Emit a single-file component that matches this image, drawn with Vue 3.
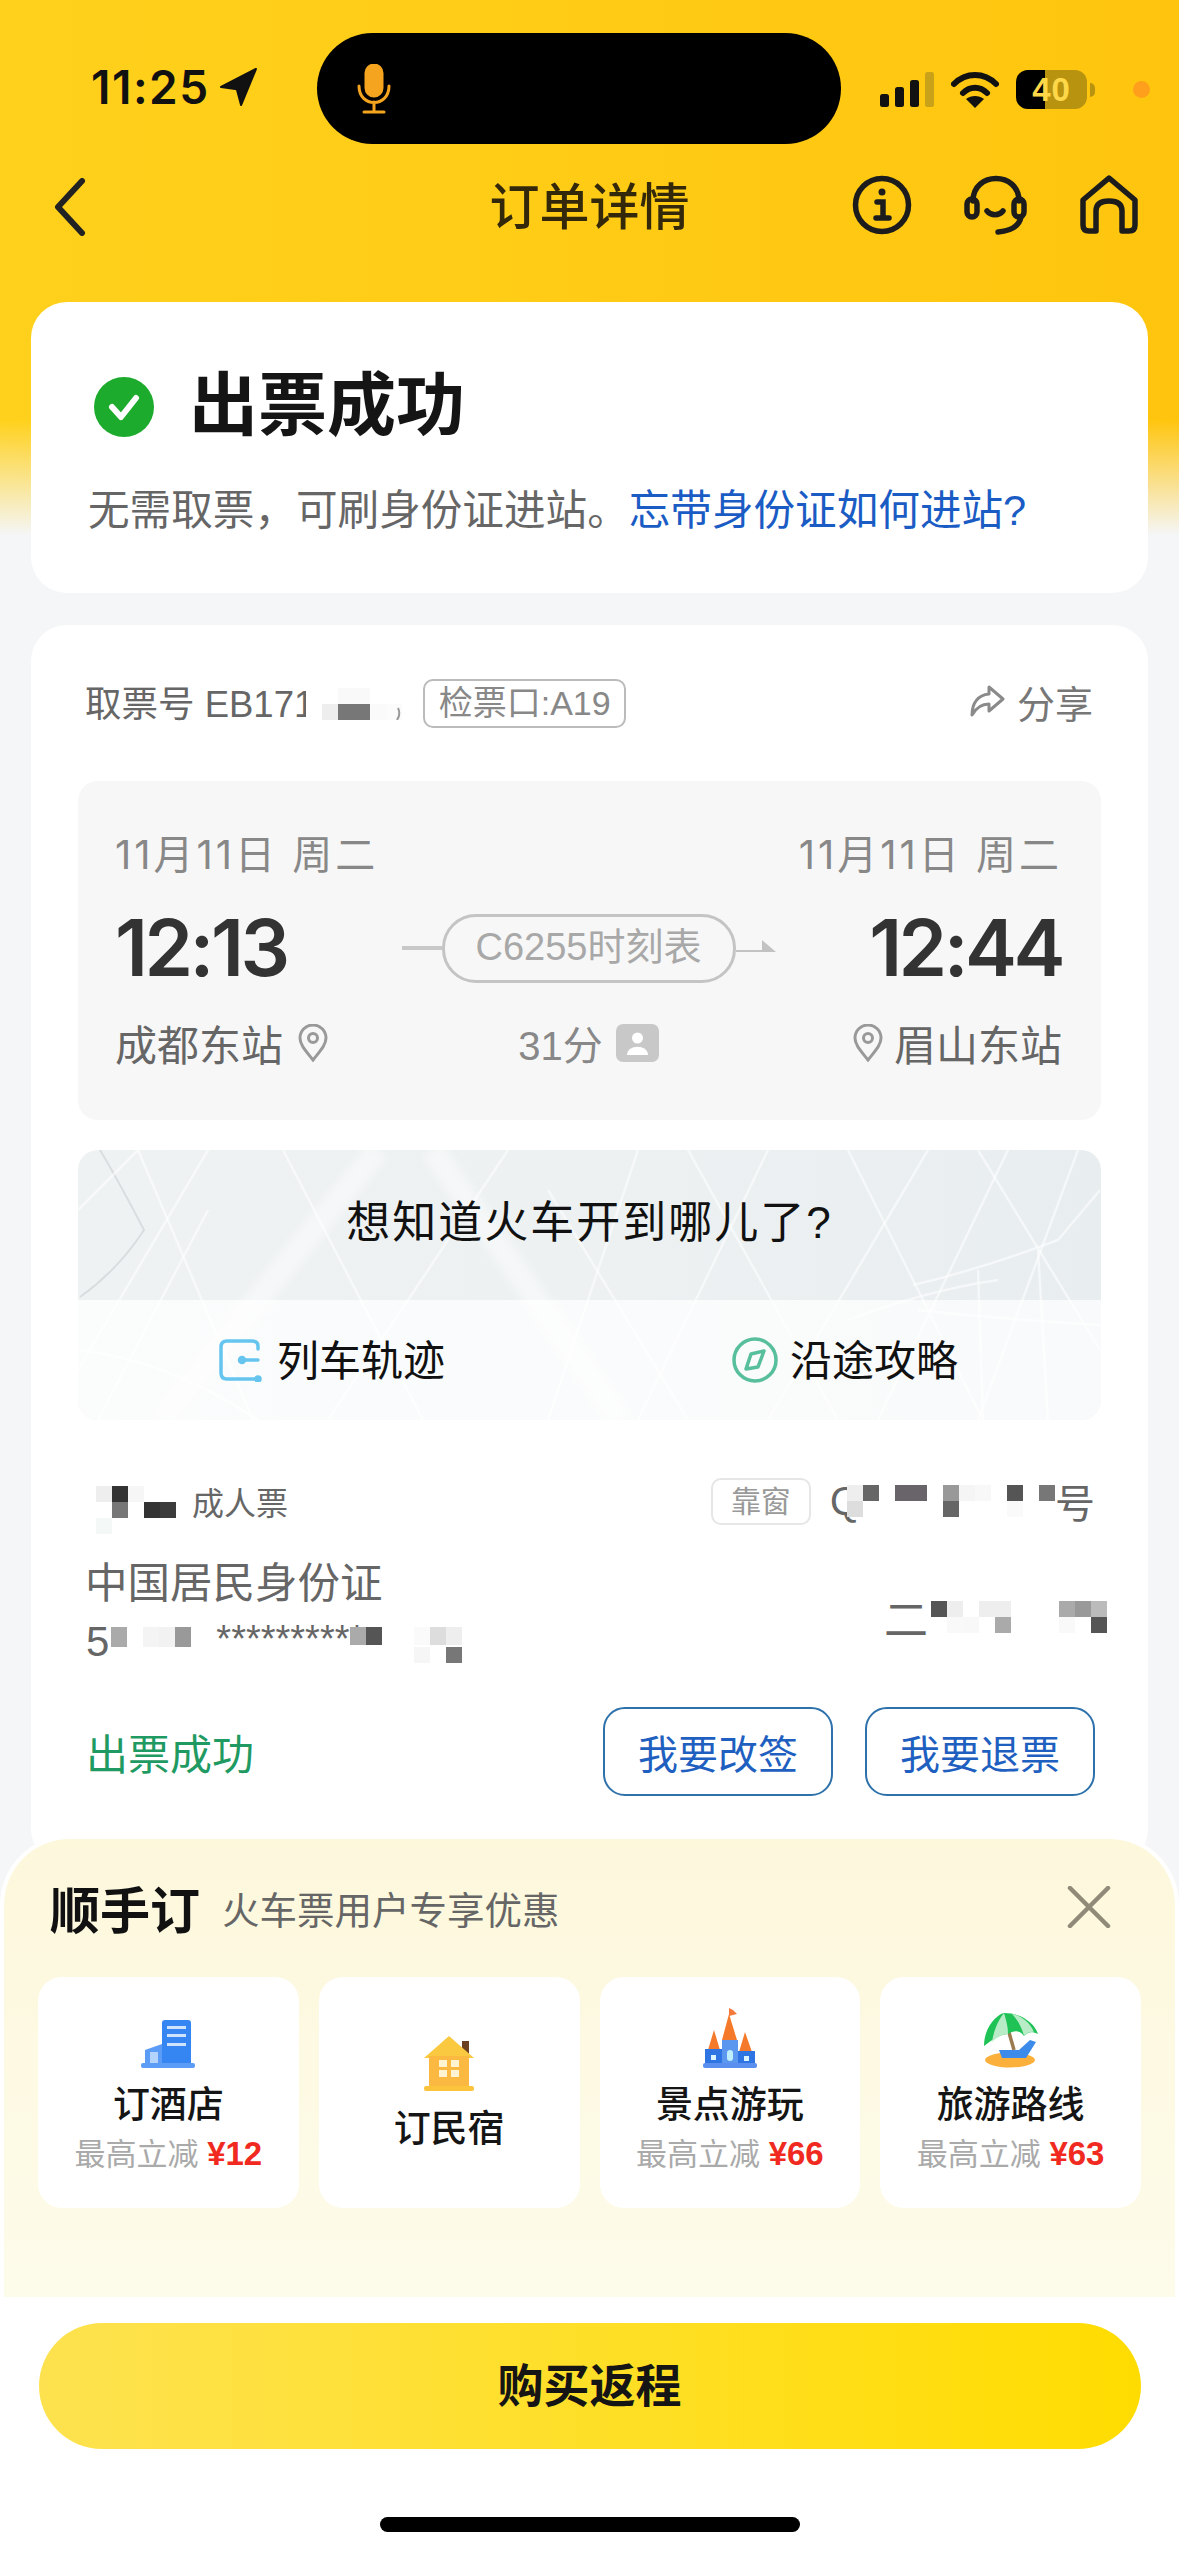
<script setup>
// blurred-out bits of the ticket, [col, row, colour] on a 16px grid
const ticketCells = [[1, 0, '#fff'], [1, 1, '#eee'], [2, 1, '#777'], [3, 1, '#777'], [2, 0, '#f9f9f9'], [3, 0, '#f9f9f9'], [4, 1, '#fafafa'], [5, 1, '#fbfbfb']]
const nameCells = [[0, 0, '#eee'], [1, 0, '#333'], [2, 0, '#f6f6f6'], [1, 1, '#777'], [3, 1, '#333'], [4, 1, '#3c3c3c'], [0, 2, '#f4f8f6']]
const seatCells = [[0, 0, '#eee'], [1, 0, '#666'], [3, 0, '#69646a'], [4, 0, '#69646a'], [6, 0, '#999'], [7, 0, '#f5f5f5'], [8, 0, '#f8f8f8'], [10, 0, '#555'], [12, 0, '#777'], [0, 1, '#ddd'], [6, 1, '#666'], [10, 1, '#fafafa']]
const idCellsA = [[0, 0, '#aaa'], [2, 0, '#f4f4f4'], [3, 0, '#f2f2f2'], [4, 0, '#999']]
const idCellsB = [[0, 0, '#aaa'], [1, 0, '#555'], [4, 1, '#f6f6f6'], [4, 0, '#fafafa'], [5, 0, '#ddd'], [6, 0, '#eee'], [6, 1, '#777']]
const berthCells = [[0, 0, '#555'], [1, 0, '#eee'], [3, 0, '#eee'], [4, 0, '#eee'], [8, 0, '#aaa'], [9, 0, '#999'], [10, 0, '#bbb'], [1, 1, '#f9f9f9'], [2, 1, '#f8f8f8'], [4, 1, '#aaa'], [8, 1, '#f9f9f9'], [10, 1, '#555']]

const mapLines = [
  'M60 0 L175 270', 'M0 60 L60 0', 'M130 0 L0 220', 'M205 0 L345 270', 'M130 60 L20 270',
  'M430 0 L250 270', 'M470 40 L610 270', 'M560 0 L470 270', 'M610 0 L760 270', 'M690 0 L560 270',
  'M770 0 L905 270', 'M850 0 L690 270', 'M930 0 L800 270', 'M900 0 L1022 200', 'M1000 0 L900 270',
  'M835 135 Q900 120 980 90 L1022 40', 'M770 170 Q850 140 920 130', 'M900 120 L905 270', 'M960 100 L970 270',
  'M840 160 Q930 170 1022 175', 'M0 200 Q90 210 180 270'
]
</script>

<template>
  <div class="page">
    <div class="status">
      <div class="clock">
        <span>11:25</span>
        <svg width="38" height="38" viewBox="0 0 36 36"><path d="M34 1 L1 18 L16 20 L20 35 Z" fill="#111" stroke="#111" stroke-width="2" stroke-linejoin="round" /></svg>
      </div>
      <div class="island">
        <svg width="34" height="50" viewBox="0 0 34 50" fill="none" stroke="#f5a41f" stroke-width="3" stroke-linecap="round">
          <rect x="9" y="1" width="16" height="31" rx="8" fill="#f5a41f" />
          <path d="M2 22 C2 44 32 44 32 22 M17 38 V48 M7 48 H27" />
        </svg>
      </div>
      <div class="sys">
        <svg width="56" height="36" viewBox="0 0 56 36">
          <rect x="0" y="22" width="9" height="13" rx="2.5" fill="#111" />
          <rect x="15" y="15" width="9" height="20" rx="2.5" fill="#111" />
          <rect x="30" y="8" width="9" height="27" rx="2.5" fill="#111" />
          <rect x="45" y="0" width="9" height="35" rx="2.5" fill="#c9a21a" />
        </svg>
        <svg width="48" height="36" viewBox="0 0 48 36" fill="none" stroke="#111" stroke-width="6" stroke-linecap="round">
          <path d="M3 12 C15 0 33 0 45 12" />
          <path d="M12 21 C19 14 29 14 36 21" />
          <path d="M24 36 L15 27 C20 23 28 23 33 27 Z" fill="#111" stroke="none" />
        </svg>
        <div class="battery"><b class="battery-fill"></b><span>40</span></div>
        <i class="battery-nub"></i>
        <i class="dot"></i>
      </div>
    </div>

    <div class="nav">
      <svg class="back" width="32" height="58" viewBox="0 0 32 58" fill="none" stroke="#222" stroke-width="6" stroke-linecap="round" stroke-linejoin="round"><path d="M28 3 L4 29 L28 55" /></svg>
      <h1 class="nav-title">订单详情</h1>
      <div class="nav-icons">
        <svg width="60" height="60" viewBox="0 0 60 60" fill="none" stroke="#1c1c1c" stroke-width="5.5" stroke-linecap="round">
          <circle cx="30" cy="30" r="26.5" />
          <circle cx="30" cy="17" r="3.5" fill="#1c1c1c" stroke="none" />
          <path d="M25 27 H31 V43 M24 43 H37" />
        </svg>
        <svg width="64" height="60" viewBox="0 0 64 60" fill="none" stroke="#1c1c1c" stroke-width="5.5" stroke-linecap="round">
          <path d="M9 26 C9 -4 55 -4 55 26" />
          <rect x="3" y="24" width="10" height="18" rx="5" />
          <rect x="50" y="24" width="10" height="18" rx="5" />
          <path d="M23 36 C27 41 35 41 39 36" />
          <path d="M57 42 C55 52 46 56 34 57" />
        </svg>
        <svg width="58" height="60" viewBox="0 0 58 60" fill="none" stroke="#1c1c1c" stroke-width="5.5" stroke-linejoin="round" stroke-linecap="round">
          <path d="M3 25 L29 3 L55 25 V50 Q55 56 49 56 H42 V36 Q42 26 29 26 Q16 26 16 36 V56 H9 Q3 56 3 50 Z" />
        </svg>
      </div>
    </div>

    <section class="card result">
      <div class="result-head">
        <svg width="62" height="62" viewBox="0 0 62 62">
          <circle cx="31" cy="31" r="30" fill="#1cab2c" />
          <path d="M19 31 L28 41 L43 22" fill="none" stroke="#fff" stroke-width="6" stroke-linecap="round" stroke-linejoin="round" />
        </svg>
        <h2>出票成功</h2>
      </div>
      <p class="result-tip">无需取票，可刷身份证进站。<a>忘带身份证如何进站?</a></p>
    </section>

    <section class="card ticket">
      <div class="ticket-top">
        <span class="ticket-no">取票号 EB171</span>
        <svg class="mosaic ticket-mosaic" width="96" height="32">
          <rect x="0" y="0" width="96" height="32" fill="#fff" />
          <rect v-for="c in ticketCells" :key="c.join()" :x="c[0] * 16" :y="c[1] * 16" width="16" height="16" :fill="c[2]" />
          <path d="M92 20 Q95 26 91 32" fill="none" stroke="#999" stroke-width="2" />
        </svg>
        <span class="gate">检票口:A19</span>
        <span class="share">
          <svg width="36" height="36" viewBox="0 0 36 36" fill="none" stroke="#8a8a8a" stroke-width="3" stroke-linejoin="round"><path d="M20 4 L34 16 L20 28 V21 C12 21 7 25 3 32 C3 20 9 12 20 11 Z" /></svg>
          分享
        </span>
      </div>

      <div class="trip">
        <div class="trip-row dates">
          <span>11月11日 周二</span>
          <span>11月11日 周二</span>
        </div>
        <div class="trip-row times">
          <span class="time">12:13</span>
          <div class="route">
            <i class="route-line"></i>
            <span class="route-pill">C6255时刻表</span>
            <svg width="40" height="20" viewBox="0 0 40 20"><path d="M0 14 H40 L26 2 V12 H0 Z" fill="#c2c2c2" /></svg>
          </div>
          <span class="time end">12:44</span>
        </div>
        <div class="trip-row stations">
          <span class="station">
            成都东站
            <svg width="30" height="38" viewBox="0 0 30 38" fill="none" stroke="#999" stroke-width="3"><path d="M15 36 C8 27 2 21 2 14 A13 13 0 0 1 28 14 C28 21 22 27 15 36 Z" /><circle cx="15" cy="14" r="4.5" /></svg>
          </span>
          <span class="duration">
            31分
            <svg width="43" height="38" viewBox="0 0 43 38"><rect width="43" height="38" rx="7" fill="#c8c8c8" /><circle cx="21.5" cy="14" r="5.5" fill="#fff" /><path d="M11 31 C11 20 32 20 32 31 Z" fill="#fff" /></svg>
          </span>
          <span class="station end">
            <svg width="30" height="38" viewBox="0 0 30 38" fill="none" stroke="#999" stroke-width="3"><path d="M15 36 C8 27 2 21 2 14 A13 13 0 0 1 28 14 C28 21 22 27 15 36 Z" /><circle cx="15" cy="14" r="4.5" /></svg>
            眉山东站
          </span>
        </div>
      </div>

      <div class="map">
        <svg class="map-bg" width="1022" height="270" viewBox="0 0 1022 270" fill="none">
          <path d="M22 0 Q40 30 66 80 Q40 120 2 147" stroke="#d8dee0" stroke-width="2" />
          <path class="map-thick" d="M300 0 L83 270 M354 0 L543 270" stroke="#fff" stroke-opacity=".45" stroke-width="24" />
          <path v-for="d in mapLines" :key="d" :d="d" stroke="#fff" stroke-opacity=".55" stroke-width="2.5" />
        </svg>
        <div class="map-title">想知道火车开到哪儿了?</div>
        <div class="map-links">
          <span class="map-link">
            <svg width="44" height="44" viewBox="0 0 44 44" fill="none" stroke="#66c5ef" stroke-width="3.5" stroke-linecap="round">
              <path d="M40 11 V8 Q40 3 34 3 H9 Q3 3 3 9 V35 Q3 41 9 41 H40" />
              <path d="M40 22 H24" />
              <circle cx="24" cy="22" r="2.5" fill="#66c5ef" />
              <circle cx="40" cy="41" r="2" fill="#66c5ef" />
            </svg>
            列车轨迹
          </span>
          <span class="map-link second">
            <svg width="46" height="46" viewBox="0 0 46 46" fill="none" stroke="#58bf9c" stroke-width="3.5" stroke-linejoin="round">
              <circle cx="23" cy="23" r="21" />
              <path d="M32 14 L26 30 L14 32 L19 17 Z" />
            </svg>
            沿途攻略
          </span>
        </div>
      </div>

      <div class="passenger">
        <div class="pass-row">
          <span class="pass-name">
            <svg class="mosaic" width="80" height="48">
              <rect v-for="c in nameCells" :key="c.join()" :x="c[0] * 16" :y="c[1] * 16" width="16" height="16" :fill="c[2]" />
            </svg>
            <em>成人票</em>
          </span>
          <span class="seat">
            <span class="seat-tag">靠窗</span>
            <span class="seat-no">
              Q
              <svg class="mosaic seat-mosaic" width="208" height="32">
                <rect v-for="c in seatCells" :key="c.join()" :x="c[0] * 16" :y="c[1] * 16" width="16" height="16" :fill="c[2]" />
              </svg>
              号
            </span>
          </span>
        </div>
        <div class="pass-id">
          <div>
            <div class="id-type">中国居民身份证</div>
            <div class="id-no">
              <span class="id-first">5</span>
              <svg class="mosaic" width="104" height="36">
                <rect v-for="c in idCellsA" :key="c.join()" :x="c[0] * 16" :y="c[1] * 16" width="16" height="20" :fill="c[2]" />
              </svg>
              <span class="stars">**********</span>
              <svg class="mosaic" width="112" height="36">
                <rect v-for="c in idCellsB" :key="c.join()" :x="c[0] * 16" :y="c[1] * 20" width="16" height="18" :fill="c[2]" />
              </svg>
            </div>
          </div>
          <div class="berth">
            <span class="berth-first">二</span>
            <svg class="mosaic" width="176" height="32">
              <rect v-for="c in berthCells" :key="c.join()" :x="c[0] * 16" :y="c[1] * 16" width="16" height="16" :fill="c[2]" />
            </svg>
          </div>
        </div>
        <div class="pass-foot">
          <span class="ok">出票成功</span>
          <div class="actions">
            <button>我要改签</button>
            <button>我要退票</button>
          </div>
        </div>
      </div>
    </section>

    <section class="sheet">
      <div class="sheet-head">
        <strong>顺手订</strong>
        <span>火车票用户专享优惠</span>
        <svg class="sheet-close" width="44" height="42" viewBox="0 0 44 42" fill="none" stroke="#8f8b78" stroke-width="4.5" stroke-linecap="round"><path d="M3 2 L41 40 M41 2 L3 40" /></svg>
      </div>
      <div class="tiles">
        <div class="tile">
          <div class="tile-icon">
            <svg width="54" height="48" viewBox="0 0 54 48">
              <path d="M21 3 Q21 0 24 0 H47 Q50 0 50 3 V44 H21 Z" fill="#3586f2" />
              <path d="M26 6 H45 V9 H26 Z M26 14 H45 V17 H26 Z M26 23 H45 V26 H26 Z" fill="#cfe3fd" />
              <path d="M4 30 L21 24 V44 H4 Z" fill="#5a9cf6" />
              <rect x="9" y="32" width="8" height="11" fill="#b5d4fb" />
              <rect x="0" y="43" width="54" height="5" rx="2" fill="#5a9cf6" />
            </svg>
          </div>
          <div class="tile-title">订酒店</div>
          <div class="tile-sub">最高立减 <b>¥12</b></div>
        </div>
        <div class="tile">
          <div class="tile-icon">
            <svg width="52" height="56" viewBox="0 0 52 56">
              <rect x="39" y="5" width="7" height="14" fill="#6d4120" />
              <path d="M26 0 L51 22 H1 Z" fill="#fbc93f" />
              <rect x="6" y="20" width="40" height="31" fill="#fbb941" />
              <path d="M16 24 H24 V31 H16 Z M28 24 H36 V31 H28 Z M16 34 H24 V41 H16 Z M28 34 H36 V41 H28 Z" fill="#fff3d2" />
              <rect x="1" y="50" width="50" height="5" rx="2" fill="#fcc43c" />
            </svg>
          </div>
          <div class="tile-title">订民宿</div>
        </div>
        <div class="tile">
          <div class="tile-icon">
            <svg width="54" height="60" viewBox="0 0 54 60">
              <path d="M26 0 V8 L34 6 L30 2 Z" fill="#f4793a" />
              <path d="M26 6 L34 32 H19 Z" fill="#f5792a" />
              <path d="M11 22 L17 42 H5 Z M42 24 L49 44 H36 Z" fill="#f5792a" />
              <rect x="19" y="32" width="16" height="24" fill="#5b97ee" />
              <rect x="2" y="41" width="17" height="15" fill="#2f74e3" />
              <rect x="35" y="43" width="17" height="13" fill="#2f74e3" />
              <rect x="24" y="42" width="6" height="11" rx="3" fill="#bfeeff" />
              <rect x="8" y="47" width="5" height="5" fill="#d9f3ff" />
              <rect x="41" y="48" width="5" height="5" fill="#d9f3ff" />
              <rect x="0" y="55" width="54" height="5" rx="2" fill="#5a8ff0" />
            </svg>
          </div>
          <div class="tile-title">景点游玩</div>
          <div class="tile-sub">最高立减 <b>¥66</b></div>
        </div>
        <div class="tile">
          <div class="tile-icon">
            <svg width="54" height="56" viewBox="0 0 54 56">
              <ellipse cx="26" cy="48" rx="25" ry="7.5" fill="#fbb03b" />
              <path d="M22 10 L30 38" stroke="#9a7a4e" stroke-width="3.5" />
              <path d="M0 34 C0 14 14 2 20 1 C36 1 50 10 54 22 C48 19 44 20 40 24 C36 18 30 18 24 22 C18 22 10 26 0 34 Z" fill="#1ec255" />
              <path d="M8 30 C10 16 16 6 20 1 C22 8 24 14 24 22 C18 22 12 26 8 30 Z M28 2 C34 8 38 16 40 24 C44 20 48 19 50 20 C46 10 36 3 28 2 Z" fill="#b8ecc6" />
              <path d="M15 38 H35 L46 28 L52 30 L42 46 H30 L18 46 Z" fill="#3c8bea" />
            </svg>
          </div>
          <div class="tile-title">旅游路线</div>
          <div class="tile-sub">最高立减 <b>¥63</b></div>
        </div>
      </div>
    </section>

    <footer class="footer">
      <button class="buy">购买返程</button>
      <i class="home-bar"></i>
    </footer>
  </div>
</template>

<style>
html, body { margin: 0; background: #fff; }
</style>

<style scoped>
.page {
  width: 1179px;
  height: 2556px;
  overflow: hidden;
  display: flex;
  flex-direction: column;
  font-family: "Liberation Sans", "Noto Sans CJK SC", sans-serif;
  color: #222;
  background:
    linear-gradient(180deg, rgba(245, 246, 247, 0) 420px, #f5f6f7 535px),
    linear-gradient(90deg, #ffd11c, #ffc50e);
}
h1, h2, p { margin: 0; font-weight: inherit; }
i, em { font-style: normal; display: block; }
svg { display: block; flex: none; }

.status {
  height: 160px;
  flex: none;
  display: flex;
  position: relative;
}
.clock {
  position: absolute;
  left: 91px;
  top: 68px;
  display: flex;
  align-items: center;
  gap: 10px;
  font: 600 46px/38px Inter, sans-serif;
  letter-spacing: 1.5px;
  color: #111;
}
.island {
  position: absolute;
  left: 317px;
  top: 33px;
  width: 524px;
  height: 111px;
  border-radius: 56px;
  background: #000;
  display: flex;
  align-items: center;
  padding-left: 40px;
  box-sizing: border-box;
}
.sys {
  position: absolute;
  left: 880px;
  top: 70px;
  display: flex;
  align-items: center;
}
.sys > svg:nth-child(2) { margin-left: 15px; }
.battery {
  position: relative;
  margin-left: 17px;
  width: 71px;
  height: 39px;
  border-radius: 12px;
  overflow: hidden;
  background: #b8930f;
  color: #ffd84a;
  font: 700 33px/39px "Liberation Sans", sans-serif;
  text-align: center;
}
.battery span { position: relative; letter-spacing: 1px; }
.battery-fill {
  position: absolute;
  inset: 0 42px 0 0;
  background: #000;
}
.battery-nub {
  margin-left: 3px;
  width: 5px;
  height: 14px;
  background: #b8930f;
  border-radius: 0 6px 6px 0;
}
.dot {
  margin-left: 38px;
  width: 17px;
  height: 17px;
  border-radius: 50%;
  background: #ff9f1c;
}

.nav {
  height: 90px;
  flex: none;
  position: relative;
  display: flex;
  align-items: center;
  justify-content: center;
}
.back { position: absolute; left: 54px; top: 18px; }
.nav-title {
  margin-top: 5px;
  font-size: 50px;
  font-weight: 500;
  line-height: 86px;
  color: #33290a;
}
.nav-icons {
  position: absolute;
  right: 41px;
  top: 15px;
  display: flex;
  gap: 52px;
}

.card {
  margin: 0 31px;
  background: #fff;
  border-radius: 36px;
  flex: none;
}
.result {
  margin-top: 52px;
  height: 291px;
  box-sizing: border-box;
  padding: 70px 58px 0;
}
.result-head {
  display: flex;
  align-items: center;
  gap: 34px;
  margin-left: 4px;
  height: 70px;
}
.result-head h2 {
  font-size: 69px;
  line-height: 70px;
  font-weight: 700;
  color: #151515;
}
.result-tip {
  margin: 39px 0 0 -1px;
  font-size: 41.6px;
  line-height: 60px;
  color: #666;
  white-space: nowrap;
}
.result-tip a { color: #1a5cc4; }

.ticket {
  margin-top: 32px;
  height: 1240px;
  box-sizing: border-box;
  padding: 54px 47px 0;
}
.ticket-top {
  display: flex;
  align-items: center;
  height: 49px;
  padding-left: 7px;
}
.ticket-no {
  margin-top: -5px;
  font-size: 36.5px;
  color: #666;
  white-space: nowrap;
}
.mosaic { flex: none; }
.ticket-mosaic { margin-left: -8px; }
.gate {
  margin-left: 21px;
  height: 49px;
  box-sizing: border-box;
  width: 203px;
  border: 2px solid #bbb;
  border-radius: 10px;
  text-align: center;
  font-size: 34px;
  line-height: 45px;
  color: #888;
  white-space: nowrap;
}
.share {
  margin-top: -5px;
  margin-left: auto;
  margin-right: 8px;
  display: flex;
  align-items: center;
  gap: 12px;
  font-size: 38px;
  color: #777;
}

.trip {
  margin-top: 53px;
  height: 339px;
  box-sizing: border-box;
  padding: 49px 39px 0 37px;
  border-radius: 20px;
  background: #f7f7f7;
}
.trip-row { display: flex; justify-content: space-between; align-items: center; }
.dates {
  height: 50px;
  font: 40px/50px Inter, "Noto Sans CJK SC", sans-serif;
  letter-spacing: 3px;
  color: #888;
}
.times {
  margin-top: 28px;
  height: 80px;
  display: grid;
  grid-template-columns: 1fr auto 1fr;
}
.time {
  font: 600 78px/80px Inter, sans-serif;
  letter-spacing: -3.5px;
  color: #333;
}
.time.end { text-align: right; }
.route { display: flex; align-items: center; }
.route-line { width: 40px; height: 4px; background: #c8c8c8; }
.route-pill {
  width: 294px;
  height: 69px;
  box-sizing: border-box;
  border: 3px solid #c4c4c4;
  border-radius: 34px;
  font-size: 38px;
  line-height: 60px;
  text-align: center;
  color: #a8a8a8;
  white-space: nowrap;
}
.stations {
  margin-top: 24px;
  height: 50px;
  display: grid;
  grid-template-columns: 1fr auto 1fr;
  font-size: 42px;
  color: #666;
}
.station { display: flex; align-items: center; gap: 15px; white-space: nowrap; }
.station.end { justify-content: flex-end; gap: 11px; }
.duration {
  display: flex;
  align-items: center;
  gap: 13px;
  font-size: 40px;
  color: #888;
}

.map {
  position: relative;
  overflow: hidden;
  margin-top: 30px;
  height: 270px;
  border-radius: 20px;
  background: linear-gradient(90deg, #eff2f3, #edf1f2 50%, #e8edef);
}
.map-bg { position: absolute; inset: 0; }
.map-thick { filter: blur(5px); }
.map-title {
  position: relative;
  height: 150px;
  box-sizing: border-box;
  padding-top: 46px;
  text-align: center;
  font-size: 44px;
  line-height: 54px;
  letter-spacing: 2px;
  color: #111;
}
.map-links {
  position: relative;
  height: 120px;
  box-sizing: border-box;
  padding: 0 0 5px 140px;
  display: flex;
  align-items: center;
  background: rgba(255, 255, 255, .72);
  font-size: 42px;
  color: #111;
}
.map-links svg { margin-top: 5px; }
.map-link { display: flex; align-items: center; gap: 15px; }
.map-link.second { margin-left: 287px; gap: 12px; }

.passenger { padding: 0 6px 0 8px; }
.pass-row {
  margin-top: 56px;
  height: 50px;
  display: flex;
  justify-content: space-between;
  align-items: center;
}
.pass-name { display: flex; align-items: center; font-size: 32px; color: #666; }
.pass-name svg { margin: 18px 16px 0 10px; }
.seat { display: flex; align-items: center; }
.seat-tag {
  width: 100px;
  height: 47px;
  box-sizing: border-box;
  border: 2px solid #e6e6e6;
  border-radius: 10px;
  text-align: center;
  font-size: 30px;
  line-height: 43px;
  color: #999;
}
.seat-no {
  margin-left: 19px;
  display: flex;
  align-items: center;
  font-size: 40px;
  color: #666;
}
.seat-mosaic { margin-left: -14px; }
.pass-id {
  margin-top: 33px;
  display: flex;
  justify-content: space-between;
  align-items: center;
}
.id-type { height: 50px; font-size: 42.5px; line-height: 50px; color: #666; margin-left: -1px; }
.id-no {
  margin-top: 13px;
  height: 40px;
  display: flex;
  align-items: center;
  font-size: 38px;
  color: #666;
}
.id-first { font-size: 42px; }
.stars { width: 132px; margin: -6px 0 0 1px; white-space: nowrap; }
.id-no > svg { margin-top: 5px; margin-left: 2px; }
.berth {
  display: flex;
  align-items: center;
  font-size: 42px;
  color: #666;
  margin-right: -12px;
  margin-top: 12px;
}
.berth-first { font-size: 44px; }
.berth svg { margin-left: 3px; }
.pass-foot {
  margin-top: 45px;
  display: flex;
  justify-content: space-between;
  align-items: center;
}
.ok { font-size: 42px; color: #1f9a62; }
.actions { display: flex; gap: 32px; }
.actions button {
  width: 230px;
  height: 89px;
  padding: 0;
  border: 2.5px solid #2f72ab;
  border-radius: 22px;
  background: #fff;
  font: 40px "Liberation Sans", "Noto Sans CJK SC", sans-serif;
  color: #1e5fc0;
}

.sheet {
  flex: none;
  height: 462px;
  margin-top: -30px;
  position: relative;
  box-sizing: border-box;
  padding: 38px 34px 0;
  border: 4px solid #fff;
  border-bottom: 0;
  border-radius: 70px 70px 0 0;
  background: linear-gradient(180deg, #fdf8dc, #fdfbea);
}
.sheet-head {
  height: 60px;
  display: flex;
  align-items: center;
  padding-left: 12px;
}
.sheet-head strong { font-size: 50px; font-weight: 700; color: #111; }
.sheet-head span { margin-left: 22px; font-size: 37.5px; color: #666; }
.sheet-close { margin-left: auto; margin-right: 30px; }
.tiles {
  margin-top: 40px;
  display: grid;
  grid-template-columns: repeat(4, 1fr);
  gap: 20px;
}
.tile {
  height: 231px;
  border-radius: 24px;
  background: #fff;
  display: flex;
  flex-direction: column;
  align-items: center;
  justify-content: center;
  padding-bottom: 2px;
  box-sizing: border-box;
}
.tile-icon {
  height: 60px;
  display: flex;
  align-items: flex-end;
}
.tile-title {
  margin-top: 16px;
  font-size: 37px;
  line-height: 44px;
  font-weight: 500;
  color: #151515;
}
.tile-sub {
  margin-top: 6px;
  font-size: 31px;
  line-height: 40px;
  color: #aaa;
  white-space: nowrap;
}
.tile-sub b { color: #f02a20; font-size: 33px; font-weight: 700; }

.footer {
  flex: 1;
  background: #fff;
  display: flex;
  flex-direction: column;
  align-items: center;
  padding-top: 26px;
}
.buy {
  width: 1102px;
  height: 126px;
  padding: 0 0 8px;
  border: 0;
  border-radius: 63px;
  background: linear-gradient(90deg, #fde24f, #ffdc00);
  font: 700 46px "Liberation Sans", "Noto Sans CJK SC", sans-serif;
  color: #151515;
}
.home-bar {
  margin-top: 68px;
  width: 420px;
  height: 15px;
  border-radius: 8px;
  background: #000;
}
</style>
